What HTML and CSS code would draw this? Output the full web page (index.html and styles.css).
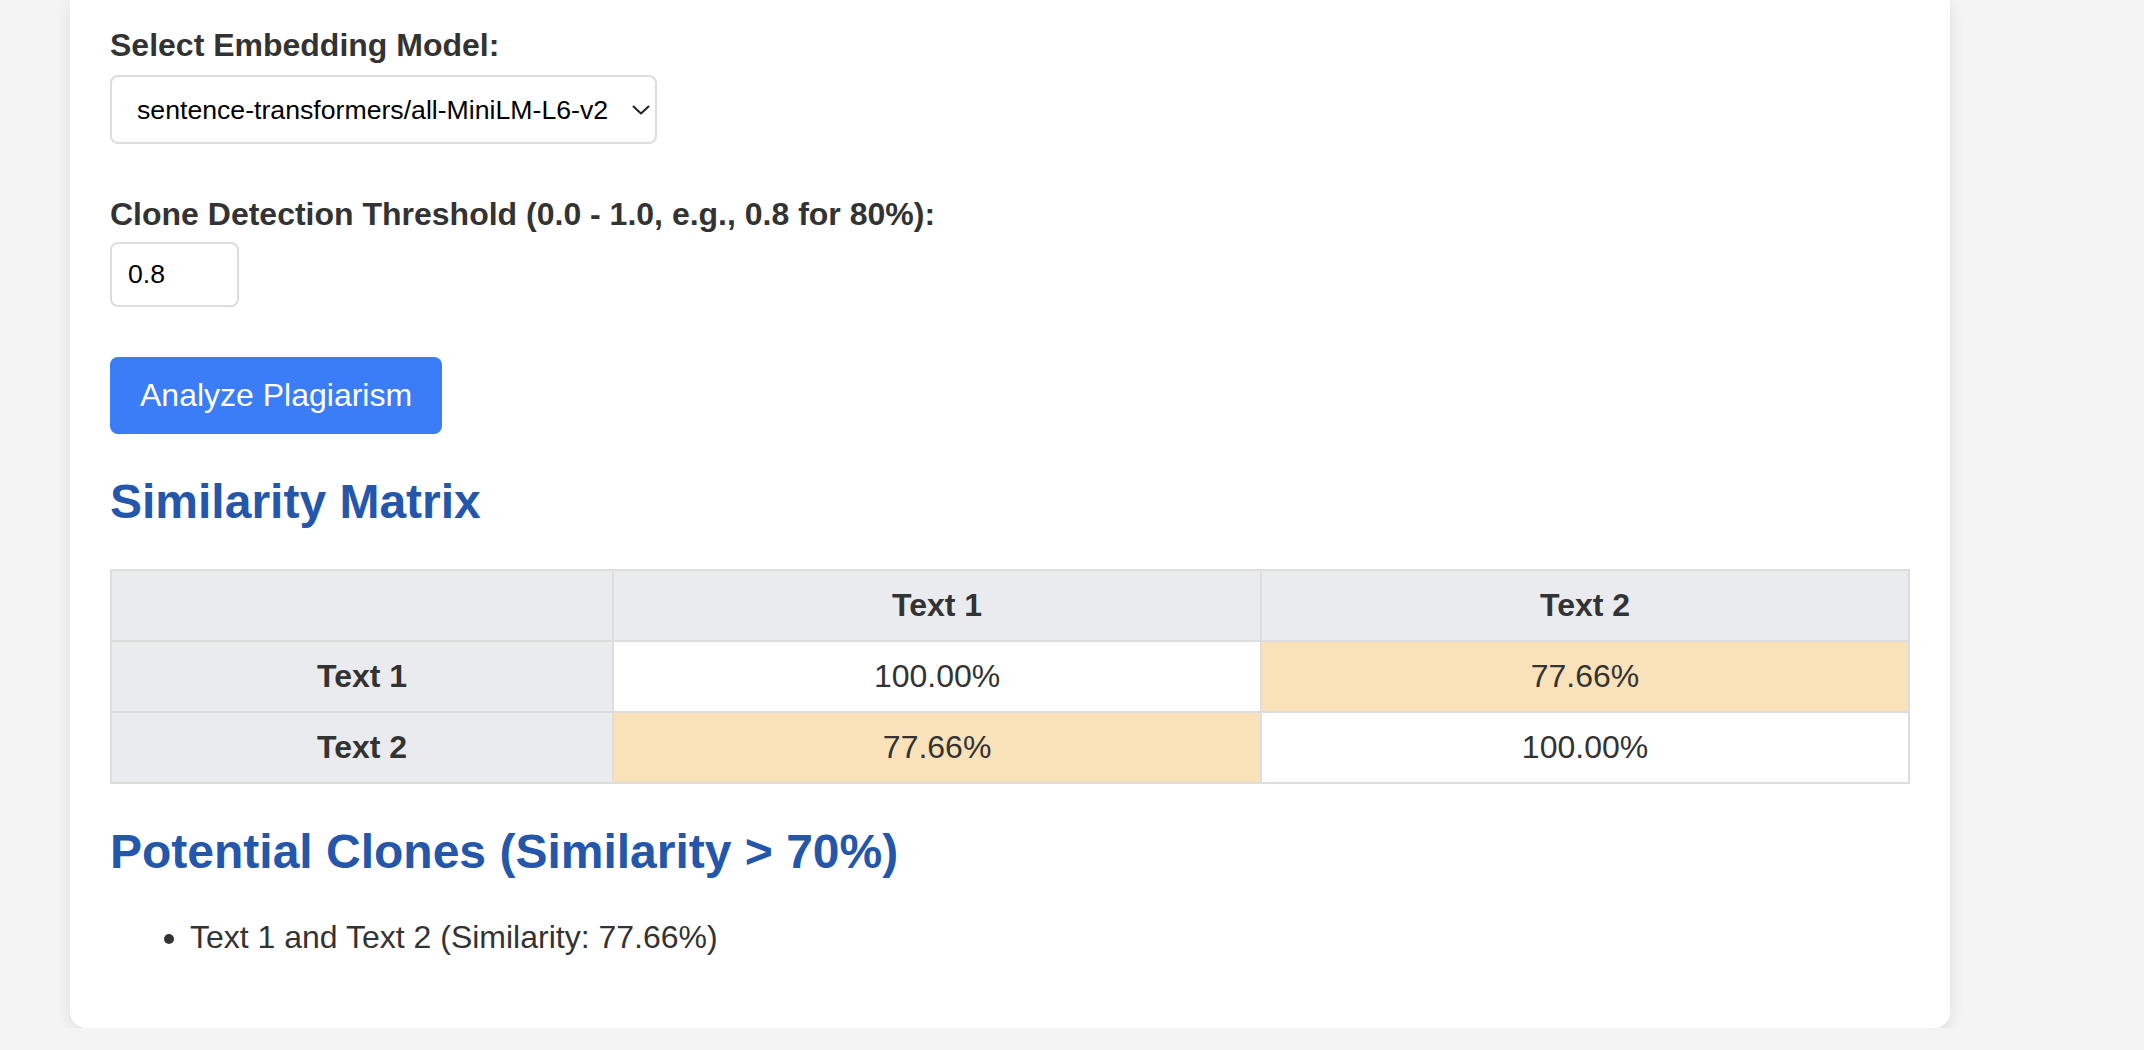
FILE: index.html
```html
<!DOCTYPE html>
<html lang="en">
<head>
<meta charset="utf-8">
<title>Plagiarism Analyzer</title>
<link rel="stylesheet" href="styles.css">
</head>
<body>
<div class="page">
  <main class="card">
    <div class="field field-model">
      <label class="label" for="model">Select Embedding Model:</label>
      <span class="select-wrap">
        <select id="model" class="select">
          <option>sentence-transformers/all-MiniLM-L6-v2</option>
        </select>
        <svg class="chevron" width="18" height="10" viewBox="0 0 18 10" aria-hidden="true"><polyline points="1.5,1.5 9,8.5 16.5,1.5" fill="none" stroke="#222" stroke-width="2" stroke-linecap="round" stroke-linejoin="round"/></svg>
      </span>
    </div>
    <div class="field field-threshold">
      <label class="label" for="threshold">Clone Detection Threshold (0.0 - 1.0, e.g., 0.8 for 80%):</label>
      <input id="threshold" class="input" type="text" value="0.8">
    </div>
    <button class="btn">Analyze Plagiarism</button>

    <h2 class="heading">Similarity Matrix</h2>
    <table class="matrix">
      <thead>
        <tr><th class="c0"></th><th class="c1">Text 1</th><th class="c1">Text 2</th></tr>
      </thead>
      <tbody>
        <tr><th>Text 1</th><td>100.00%</td><td class="hi">77.66%</td></tr>
        <tr><th>Text 2</th><td class="hi">77.66%</td><td>100.00%</td></tr>
      </tbody>
    </table>

    <h2 class="heading">Potential Clones (Similarity &gt; 70%)</h2>
    <ul class="clones">
      <li>Text 1 and Text 2 (Similarity: 77.66%)</li>
    </ul>
  </main>
</div>
</body>
</html>
```

FILE: styles.css
```css
html, body {
  margin: 0;
  padding: 0;
}
body {
  background: #f4f4f4;
  font-family: "Liberation Sans", Arial, sans-serif;
  color: #333;
}
.page {
  padding-left: 70px;
}
.card {
  width: 1880px;
  box-sizing: border-box;
  background: #fff;
  padding: 27px 40px 40px 40px;
  border-radius: 0 0 16px 16px;
  box-shadow: 0 4px 16px rgba(0, 0, 0, 0.09);
}
.field {
  margin-bottom: 50px;
}
.field-model {
  margin-bottom: 52px;
}
.label {
  display: block;
  font-size: 32px;
  font-weight: bold;
  color: #333;
  margin-bottom: 11px;
  line-height: normal;
}
.field-threshold .label {
  margin-bottom: 9px;
}
.select-wrap {
  position: relative;
  display: inline-block;
  vertical-align: top;
}
.select {
  appearance: none;
  -webkit-appearance: none;
  width: 547px;
  height: 69px;
  box-sizing: border-box;
  border: 2px solid #ddd;
  border-radius: 8px;
  background: #fff;
  padding: 0 40px 0 25px;
  font-family: "Liberation Sans", Arial, sans-serif;
  font-size: 26.67px;
  color: #000;
  display: block;
  margin: 0;
}
.chevron {
  position: absolute;
  right: 7px;
  top: 30px;
  pointer-events: none;
}
.input {
  display: block;
  width: 129px;
  height: 65px;
  box-sizing: border-box;
  border: 2px solid #ddd;
  border-radius: 8px;
  padding: 0 16px;
  font-family: "Liberation Sans", Arial, sans-serif;
  font-size: 26.67px;
  color: #000;
  margin: 0;
  background: #fff;
}
.btn {
  display: block;
  background: #3b7df6;
  color: #fff;
  border: none;
  border-radius: 8px;
  padding: 20px 30px;
  font-family: "Liberation Sans", Arial, sans-serif;
  font-size: 32px;
  line-height: normal;
  margin: 0;
  cursor: pointer;
}
.heading {
  font-size: 48px;
  font-weight: bold;
  color: #2456ab;
  margin: 40px 0;
  line-height: normal;
}
.matrix {
  width: 100%;
  border-collapse: collapse;
  border: 2px solid #ddd;
  font-size: 32px;
  margin-bottom: 40px;
}
.matrix th,
.matrix td {
  border: 2px solid #ddd;
  padding: 16px;
  text-align: center;
  line-height: normal;
  color: #333;
}
.matrix th {
  background: #eaebef;
  font-weight: bold;
}
.matrix td {
  background: #fff;
  font-weight: normal;
}
.matrix td.hi {
  background: #f9e1ba;
}
.c0 {
  width: 27.9%;
}
.c1 {
  width: 36%;
}
.clones {
  margin: 32px 0 32px 0;
  padding-left: 80px;
  font-size: 32px;
  line-height: normal;
  color: #333;
}
```
